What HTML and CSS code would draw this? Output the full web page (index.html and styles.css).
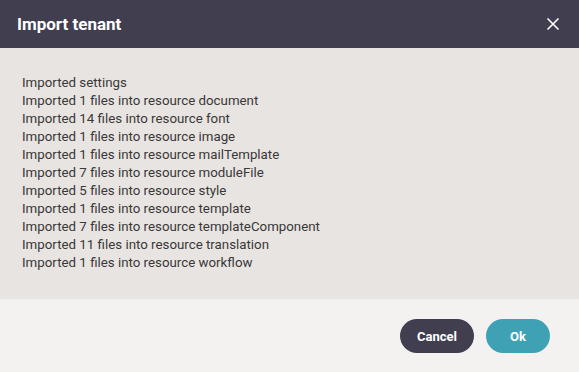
FILE: index.html
```html
<!DOCTYPE html>
<html lang="en">
<head>
  <meta charset="UTF-8">
  <title>Import tenant</title>
  <link rel="stylesheet" href="styles.css">
</head>
<body>
  <div class="dialog">
    <div class="dialog-header">
      <h1>Import tenant</h1>
      <button class="close-btn" aria-label="Close">
        <svg width="14" height="14" viewBox="0 0 14 14">
          <path d="M1.5 1.5 L12.5 12.5 M12.5 1.5 L1.5 12.5" stroke="#fff" stroke-width="1.6" fill="none"/>
        </svg>
      </button>
    </div>
    <div class="dialog-body">
      <p>Imported settings</p>
      <p>Imported 1 files into resource document</p>
      <p>Imported 14 files into resource font</p>
      <p>Imported 1 files into resource image</p>
      <p>Imported 1 files into resource mailTemplate</p>
      <p>Imported 7 files into resource moduleFile</p>
      <p>Imported 5 files into resource style</p>
      <p>Imported 1 files into resource template</p>
      <p>Imported 7 files into resource templateComponent</p>
      <p>Imported 11 files into resource translation</p>
      <p>Imported 1 files into resource workflow</p>
    </div>
    <div class="dialog-footer">
      <button class="btn btn-cancel">Cancel</button>
      <button class="btn btn-ok">Ok</button>
    </div>
  </div>
</body>
</html>
```

FILE: styles.css
```css
body {
  margin: 0;
  font-family: Roboto, "Liberation Sans", sans-serif;
  background: #f4f2f0;
}
.dialog {
  width: 579px;
  height: 372px;
  display: flex;
  flex-direction: column;
}
.dialog-header {
  height: 48px;
  background: #403e4f;
  display: flex;
  align-items: center;
  justify-content: space-between;
  padding: 0 19px 0 17px;
}
.dialog-header h1 {
  margin: 0;
  color: #fff;
  font-size: 17px;
  font-weight: 700;
}
.close-btn {
  background: none;
  border: 0;
  padding: 0;
  width: 14px;
  height: 14px;
  cursor: pointer;
  display: flex;
}
.dialog-body {
  background: #e8e4e1;
  height: 251px;
  box-sizing: border-box;
  padding: 26px 22px 0;
}
.dialog-body p {
  margin: 0;
  font-size: 13.3px;
  line-height: 18px;
  color: #383838;
}
.dialog-footer {
  flex: 1;
  background: #f4f2f0;
  display: flex;
  justify-content: flex-end;
  align-items: flex-start;
  gap: 12px;
  padding: 20px 29px 0 0;
}
.btn {
  height: 34px;
  border: 0;
  border-radius: 17px;
  color: #fff;
  font-family: Roboto, "Liberation Sans", sans-serif;
  font-size: 13px;
  font-weight: 700;
  cursor: pointer;
}
.btn-cancel {
  width: 74px;
  background: #403e4f;
}
.btn-ok {
  width: 64px;
  background: #3ea2b4;
}
```
